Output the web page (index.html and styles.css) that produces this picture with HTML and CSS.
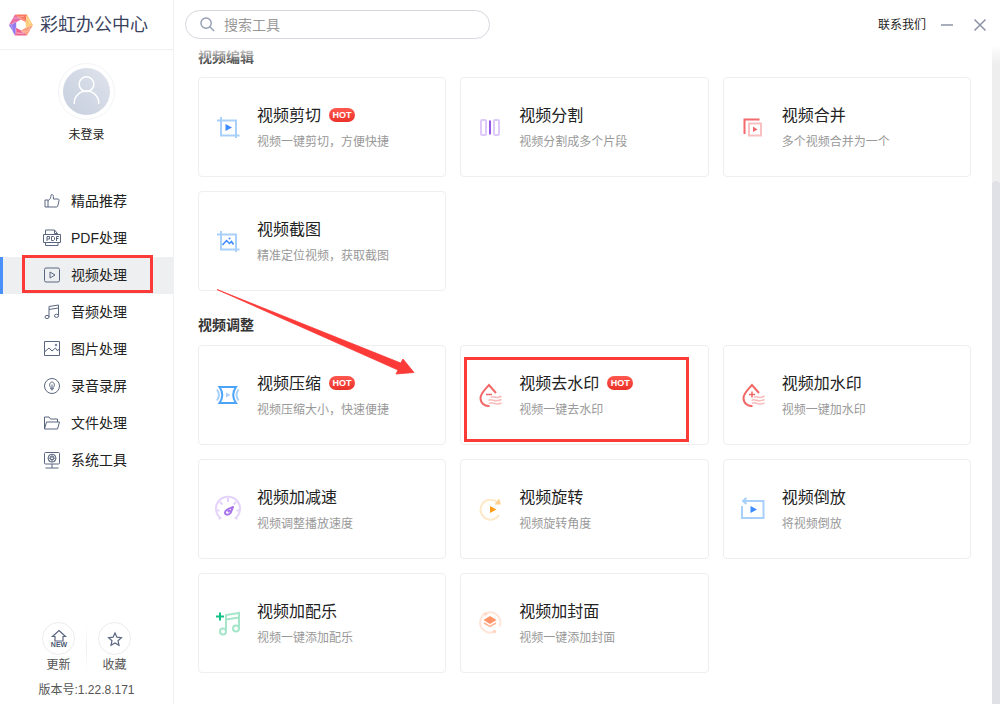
FILE: index.html
```html
<!DOCTYPE html>
<html lang="zh-CN">
<head>
<meta charset="utf-8">
<meta name="viewport" content="width=device-width, initial-scale=1">
<title>彩虹办公中心</title>
<link rel="stylesheet" href="styles.css">
</head>
<body>
<div class="app">
  <aside class="sidebar">
    <header class="brand">
      <svg class="brand-logo" viewBox="0 0 24 24" aria-hidden="true">
        <path fill="#fb9f80" d="M24 12L18 22.4L12 17.5L16.8 14.75Z"/>
        <path fill="#ee5f8c" d="M18 22.4L6 22.4L7.2 14.75L12 17.5Z"/>
        <path fill="#9378ee" d="M6 22.4L0 12L7.2 9.25L7.2 14.75Z"/>
        <path fill="#e66fa6" d="M0 12L6 1.6L12 6.5L7.2 9.25Z"/>
        <path fill="#f9765f" d="M6 1.6L18 1.6L16.8 9.25L12 6.5Z"/>
        <path fill="#fdc873" d="M18 1.6L24 12L16.8 14.75L16.8 9.25Z"/>
        <path fill="none" stroke="#fff" stroke-opacity=".55" stroke-width=".6" d="M4 5L12 5.2L17.8 8.5M17 3.4L20.6 9.5L17.6 14.6M21.5 15L17.6 19L12 18.6M15 21L7.4 19.4L6.4 14.6M3.8 18.6L2.6 12L6.4 8.4M8.6 4L15 3.4M19.6 6L22 11M6.8 20.8L15 19.8"/>
      </svg>
      <h1 class="brand-name">彩虹办公中心</h1>
    </header>

    <div class="profile">
      <button class="avatar" type="button" aria-label="登录">
        <svg viewBox="0 0 48 48" aria-hidden="true"><g fill="none" stroke="#fff" stroke-width="1.6" stroke-linecap="round"><circle cx="24" cy="16.500" r="7.500"/><path d="M11.500 36V35.500A12.500 12 0 0 1 36.500 35.500V36"/></g></svg>
      </button>
      <span class="profile-name">未登录</span>
    </div>

    <nav class="nav">
      <a class="nav-item" href="#featured">
        <svg class="nav-icon" viewBox="0 0 18 18" aria-hidden="true"><path d="M2 8H5V15H2ZM5 8.500C7.500 7.500 8 5 8 3.200C8.200 2 10.400 2.400 10.400 4.500V7H15C16 7 16.200 8 16 8.800L14.800 14C14.500 14.800 14 15 13.500 15H5"/></svg>
        精品推荐
      </a>
      <a class="nav-item" href="#pdf">
        <svg class="nav-icon" viewBox="0 0 18 18" aria-hidden="true"><path d="M2.500 5V1H11.500L14.500 4.500V5M11.500 1V4.500H14.500M.5 5.500H17.500V13.500H.5ZM2.500 14V16.500H15V14M4 12V7.500H6.500V10H4M8.500 7.500V11.500H10.500L11.500 10.500V8.500L10.500 7.500ZM13.500 12V7.500H16M13.500 9.500H15.500"/></svg>
        PDF处理
      </a>
      <a class="nav-item nav-item-active" href="#video" aria-current="page">
        <svg class="nav-icon" viewBox="0 0 18 18" aria-hidden="true"><rect x="1.500" y="2" width="15" height="14" rx="1.500"/><path d="M7 6L12 9L7 12Z"/></svg>
        视频处理
        <span class="mark mark-nav"></span>
      </a>
      <a class="nav-item" href="#audio">
        <svg class="nav-icon" viewBox="0 0 18 18" aria-hidden="true"><path d="M6 14V3.500L15.500 2V12.500M6 6.500L15.500 5"/><ellipse cx="4" cy="14" rx="2" ry="1.600"/><ellipse cx="13.500" cy="12.800" rx="2" ry="1.600"/></svg>
        音频处理
      </a>
      <a class="nav-item" href="#image">
        <svg class="nav-icon" viewBox="0 0 18 18" aria-hidden="true"><path d="M1.500 1.500H16.500V15.500H1.500ZM1.500 12L6 8L9 11L12.500 8L14 10.500L16.500 9.500"/><circle cx="13" cy="5" r=".8"/></svg>
        图片处理
      </a>
      <a class="nav-item" href="#record">
        <svg class="nav-icon" viewBox="0 0 18 18" aria-hidden="true"><circle cx="9" cy="9" r="7.500"/><path d="M7.800 10.500C5.500 8.500 7 5 9 5S12.500 8.500 10.200 10.500V12H7.800ZM9 7.500V13.500"/></svg>
        录音录屏
      </a>
      <a class="nav-item" href="#file">
        <svg class="nav-icon" viewBox="0 0 18 18" aria-hidden="true"><path d="M1.500 15V3H6L7.500 5H14.500V8M1.500 15L3.500 8H16.500L14.500 15Z"/></svg>
        文件处理
      </a>
      <a class="nav-item" href="#system">
        <svg class="nav-icon" viewBox="0 0 18 18" aria-hidden="true"><rect x="1.500" y="1.500" width="15" height="11.500" rx="1"/><path d="M9 13V17M2.500 17H15.500"/><circle cx="9" cy="7.200" r="4"/><circle cx="9" cy="7.200" r="1.500"/><path d="M9 3.400V5.700M9 8.700V11M5.200 7.200H7.500M10.500 7.200H12.800M6.300 4.500L8 6.200M11.700 4.500L10 6.200M6.300 9.900L8 8.200M11.700 9.900L10 8.200"/></svg>
        系统工具
      </a>
    </nav>

    <footer class="side-foot">
      <div class="quick">
        <button class="quick-btn" type="button">
          <span class="quick-circle">
            <svg viewBox="0 0 20 20" aria-hidden="true"><path d="M10 1.500L16.500 7.500H14V12H6V7.500H3.500Z"/><text class="new-label" x="10" y="18" text-anchor="middle">NEW</text></svg>
          </span>
          更新
        </button>
        <span class="quick-divider"></span>
        <button class="quick-btn" type="button">
          <span class="quick-circle">
            <svg viewBox="0 0 20 20" aria-hidden="true"><path d="M10 4L11.900 8.200L16.400 8.700L13 11.700L14 16.200L10 13.900L6 16.200L7 11.700L3.600 8.700L8.100 8.200Z"/></svg>
          </span>
          收藏
        </button>
      </div>
      <p class="version">版本号:1.22.8.171</p>
    </footer>
  </aside>

  <div class="main">
    <header class="topbar">
      <label class="search">
        <svg class="search-icon" viewBox="0 0 16 16" aria-hidden="true"><circle cx="6.500" cy="6.500" r="5.500"/><path d="M10.500 10.500L15 15"/></svg>
        <input class="search-input" type="search" placeholder="搜索工具" aria-label="搜索工具">
      </label>
      <div class="window-actions">
        <a class="contact" href="#contact">联系我们</a>
        <button class="win-btn" type="button" aria-label="最小化"><svg viewBox="0 0 14 14" aria-hidden="true"><path d="M1 7H13"/></svg></button>
        <button class="win-btn" type="button" aria-label="关闭"><svg viewBox="0 0 14 14" aria-hidden="true"><path d="M1.500 1.500L12.500 12.500M12.500 1.500L1.500 12.500"/></svg></button>
      </div>
    </header>

    <div class="viewport">
      <main class="content">
        <section class="group">
          <h2 class="group-title">视频编辑</h2>
          <div class="cards">
            <a class="card" href="#cut">
              <svg class="card-icon" viewBox="0 0 28 28" aria-hidden="true"><path fill="none" stroke="#a9d0fb" stroke-width="2" d="M3 7.500H22V25M7 4V22.500H25.500"/><path fill="#3d8bff" d="M11.500 11L18 14.500L11.500 18Z"/></svg>
              <span class="card-text"><span class="card-title">视频剪切<span class="hot">HOT</span></span><span class="card-desc">视频一键剪切，方便快捷</span></span>
            </a>
            <a class="card" href="#split">
              <svg class="card-icon" viewBox="0 0 28 28" aria-hidden="true"><g fill="none" stroke="#decafa" stroke-width="2"><rect x="5" y="7" width="5" height="15" rx="1"/><rect x="18" y="7" width="5" height="15" rx="1"/></g><path stroke="#9558ea" stroke-width="2" d="M14 7.500V21.500"/></svg>
              <span class="card-text"><span class="card-title">视频分割</span><span class="card-desc">视频分割成多个片段</span></span>
            </a>
            <a class="card" href="#merge">
              <svg class="card-icon" viewBox="0 0 28 28" aria-hidden="true"><path fill="none" stroke="#f4696b" stroke-width="2" d="M5.500 21V6.500H20.500"/><rect x="10" y="10.500" width="12" height="12" fill="none" stroke="#fabfc0" stroke-width="2"/><path fill="#f4696b" d="M14 13.500L18.500 16.500L14 19Z"/></svg>
              <span class="card-text"><span class="card-title">视频合并</span><span class="card-desc">多个视频合并为一个</span></span>
            </a>
            <a class="card" href="#snapshot">
              <svg class="card-icon" viewBox="0 0 28 28" aria-hidden="true"><path fill="none" stroke="#a9d0fb" stroke-width="2" d="M3 7.500H22V25M7 4V22.500H25.500"/><path fill="none" stroke="#3d8bff" stroke-width="1.500" d="M8.500 18L12.500 13.500L15.500 16.500L17.500 14.500L19.500 17.500"/><circle cx="15.500" cy="11.500" r="1" fill="#3d8bff"/></svg>
              <span class="card-text"><span class="card-title">视频截图</span><span class="card-desc">精准定位视频，获取截图</span></span>
            </a>
          </div>
        </section>

        <section class="group">
          <h2 class="group-title">视频调整</h2>
          <div class="cards">
            <a class="card" href="#compress">
              <svg class="card-icon" viewBox="0 0 28 28" aria-hidden="true"><path fill="none" stroke="#4ba3fa" stroke-width="2" d="M5.500 6H22C18.500 11 18.500 17 22 22H5.500C9 17 9 11 5.500 6Z"/><path fill="none" stroke="#a9d0fb" stroke-width="2" d="M3 8.500C5.500 12 5.500 16 3 19.500M24.500 8.500C22 12 22 16 24.500 19.500"/><path fill="#a9d0fb" d="M12 11.500L16.500 14L12 16.500Z"/></svg>
              <span class="card-text"><span class="card-title">视频压缩<span class="hot">HOT</span></span><span class="card-desc">视频压缩大小，快速便捷</span></span>
              <svg class="arrow" viewBox="0 0 198 86" aria-hidden="true"><path fill="#fc3b39" stroke="#fc3b39" stroke-width=".8" d="M0 .5L183.700 74L186 70L197 83.500L179 85L181 81Z"/></svg>
            </a>
            <a class="card" href="#remove-watermark">
              <svg class="card-icon" viewBox="0 0 28 28" aria-hidden="true"><path fill="none" stroke="#f26766" stroke-width="2" d="M20 12L13 4C9 8.500 4.500 12.500 4.500 17C4.500 22 8.500 25.500 13.500 25"/><path stroke="#f26766" stroke-width="1.500" d="M10 13.500H16"/><path fill="none" stroke="#f9bcbb" stroke-width="1.500" d="M15 16.500C18 13.500 19 19 25.500 15M12.500 19.500C16 17 18 22 25.500 18.500M13 22.500C16 20 19 25 25.500 22"/></svg>
              <span class="card-text"><span class="card-title">视频去水印<span class="hot">HOT</span></span><span class="card-desc">视频一键去水印</span></span>
              <span class="mark mark-card"></span>
            </a>
            <a class="card" href="#add-watermark">
              <svg class="card-icon" viewBox="0 0 28 28" aria-hidden="true"><path fill="none" stroke="#f26766" stroke-width="2" d="M20 12L13 4C9 8.500 4.500 12.500 4.500 17C4.500 22 8.500 25.500 13.500 25"/><path stroke="#f26766" stroke-width="1.500" d="M10 13.500H16M13 10.500V16.500"/><path fill="none" stroke="#f9bcbb" stroke-width="1.500" d="M15 16.500C18 13.500 19 19 25.500 15M12.500 19.500C16 17 18 22 25.500 18.500M13 22.500C16 20 19 25 25.500 22"/></svg>
              <span class="card-text"><span class="card-title">视频加水印</span><span class="card-desc">视频一键加水印</span></span>
            </a>
            <a class="card" href="#speed">
              <svg class="card-icon" viewBox="0 0 28 28" aria-hidden="true"><path fill="none" stroke="#e4d3fb" stroke-width="2" d="M4.500 24L7 22.500L6.500 23A12 12 0 1 1 21.500 23L21 22.500L23.500 24M14 3V7M6 7L8.500 9.500M22 7L19.500 9.500M2 15.500H5.500M26 15.500H22.500"/><path fill="none" stroke="#a873ec" stroke-width="2" stroke-linejoin="round" d="M19 12L16.500 18C14.500 20.500 11 20 11 17.500C11 15 14 14 19 12ZM14 17L16 15"/></svg>
              <span class="card-text"><span class="card-title">视频加减速</span><span class="card-desc">视频调整播放速度</span></span>
            </a>
            <a class="card" href="#rotate">
              <svg class="card-icon" viewBox="0 0 28 28" aria-hidden="true"><path fill="none" stroke="#ffe8c8" stroke-width="2" d="M21 7A10 10 0 1 0 23 20"/><path fill="#ffd08e" d="M23 3.500L25 9.500H18.500Z"/><path fill="#ff9d1b" d="M14 11L20.500 14.500L14 18Z"/></svg>
              <span class="card-text"><span class="card-title">视频旋转</span><span class="card-desc">视频旋转角度</span></span>
            </a>
            <a class="card" href="#reverse">
              <svg class="card-icon" viewBox="0 0 28 28" aria-hidden="true"><path fill="none" stroke="#a9d0fb" stroke-width="2" d="M3 11V23H24.500V6H4M7.500 3L4 6L7.500 9"/><path fill="#3d8bff" d="M11.500 11L18 14.500L11.500 18Z"/></svg>
              <span class="card-text"><span class="card-title">视频倒放</span><span class="card-desc">将视频倒放</span></span>
            </a>
            <a class="card" href="#music">
              <svg class="card-icon" viewBox="0 0 28 28" aria-hidden="true"><path fill="none" stroke="#a5e6cb" stroke-width="2" d="M12 22.500V6L25 4V20M12 10.500L25 8.500"/><g fill="none" stroke="#a5e6cb" stroke-width="2"><circle cx="9" cy="22.500" r="3"/><circle cx="22" cy="19.500" r="3"/></g><path stroke="#14c286" stroke-width="2" d="M2 7.500H10M6 3.500V11.500"/></svg>
              <span class="card-text"><span class="card-title">视频加配乐</span><span class="card-desc">视频一键添加配乐</span></span>
            </a>
            <a class="card" href="#cover">
              <svg class="card-icon" viewBox="0 0 28 28" aria-hidden="true"><g fill="none" stroke="#ffe5d8" stroke-width="2"><path d="M10 4.500A10 10 0 0 1 23.500 17.500M18.500 22.500A10 10 0 0 1 5 9.500M5 9.500L8 4.500"/></g><circle cx="9.500" cy="5" r="1.800" fill="#ffd8c6"/><circle cx="18.500" cy="22.500" r="1.800" fill="#ffd8c6"/><path fill="#ff9468" d="M14 7L20.500 11L14 15L7.500 11Z"/><path fill="none" stroke="#ffb395" stroke-width="1.500" d="M8 14L14 17.500L20 14"/></svg>
              <span class="card-text"><span class="card-title">视频加封面</span><span class="card-desc">视频一键添加封面</span></span>
            </a>
          </div>
        </section>
      </main>
      <div class="scrollbar" aria-hidden="true"><span class="scroll-thumb"></span></div>
    </div>
  </div>
</div>
</body>
</html>
```

FILE: styles.css
```css
* {
  box-sizing: border-box;
}

body {
  margin: 0;
  background: #fff;
  color: #222;
  font: 12px/16px "Liberation Sans", "Noto Sans CJK SC", sans-serif;
}

h1,
h2,
p {
  margin: 0;
}

a {
  color: inherit;
  text-decoration: none;
}

button {
  padding: 0;
  border: 0;
  background: none;
  color: inherit;
  font: inherit;
  cursor: pointer;
}

.app {
  display: grid;
  grid-template-columns: 174px minmax(0, 1fr);
  height: 100vh;
}

/* Sidebar */
.sidebar {
  display: flex;
  flex-direction: column;
  border-right: 1px solid #f0f0f2;
}

.brand {
  display: flex;
  align-items: center;
  gap: 7px;
  height: 50px;
  padding-left: 9px;
  border-bottom: 1px solid #f0f0f2;
}

.brand-logo {
  width: 24px;
  height: 24px;
}

.brand-name {
  color: #3a4360;
  font-size: 18px;
  font-weight: 400;
  line-height: 24px;
}

.profile {
  display: flex;
  flex-direction: column;
  align-items: center;
  gap: 7px;
  padding-top: 13px;
}

.avatar {
  width: 57px;
  height: 57px;
  padding: 4px;
  border: 1px solid #f2f3f6;
  border-radius: 50%;
}

.avatar svg {
  display: block;
  border-radius: 50%;
  background: linear-gradient(45deg, #c6cfde, #dfe3ec);
}

.nav {
  display: flex;
  flex-direction: column;
  padding-top: 40px;
}

.nav-item {
  position: relative;
  display: flex;
  align-items: center;
  gap: 10px;
  height: 37px;
  padding: 0 0 1px 40px;
  border-left: 3px solid transparent;
  font-size: 14px;
}

.nav-item-active {
  border-left-color: #4a90fb;
  background: #eeeff1;
}

.nav-icon {
  width: 18px;
  height: 18px;
  fill: none;
  stroke: #5a6780;
  stroke-width: 1;
}

.side-foot {
  display: flex;
  flex-direction: column;
  align-items: center;
  gap: 9px;
  margin-top: auto;
  padding-bottom: 6px;
  color: #555;
}

.quick {
  display: flex;
  align-items: center;
  gap: 11px;
}

.quick-btn {
  display: flex;
  flex-direction: column;
  align-items: center;
  gap: 2px;
}

.quick-circle {
  display: grid;
  place-items: center;
  width: 33px;
  height: 33px;
  border: 1px solid #ececf0;
  border-radius: 50%;
}

.quick-circle svg {
  width: 20px;
  height: 20px;
  fill: none;
  stroke: #5a6780;
  stroke-width: 1.2;
}

.quick-circle .new-label {
  fill: #4c5872;
  stroke: none;
  font: bold 7px "Liberation Sans", sans-serif;
}

.quick-divider {
  width: 1px;
  height: 44px;
  background: linear-gradient(#fff, #eee, #fff);
}

/* Main column */
.main {
  display: flex;
  flex-direction: column;
  min-height: 0;
}

.topbar {
  position: relative;
  display: flex;
  align-items: center;
  justify-content: space-between;
  padding: 10px 13px 8px 11px;
}

.topbar::after {
  content: "";
  position: absolute;
  z-index: 1;
  top: 100%;
  right: 0;
  left: 0;
  height: 18px;
  background: linear-gradient(rgba(255, 255, 255, .9), rgba(255, 255, 255, 0));
  pointer-events: none;
}

.search {
  display: flex;
  align-items: center;
  gap: 9px;
  width: 305px;
  height: 29px;
  padding: 0 14px;
  border: 1px solid #d6d8de;
  border-radius: 15px;
}

.search-icon {
  width: 15px;
  height: 15px;
  fill: none;
  stroke: #929cb2;
  stroke-width: 1.5px;
}

.search-input {
  flex: 1;
  min-width: 0;
  padding: 0;
  border: 0;
  outline: 0;
  background: none;
  font: 14px/20px "Liberation Sans", "Noto Sans CJK SC", sans-serif;
}

.search-input::placeholder {
  color: #999;
}

.window-actions {
  display: flex;
  align-items: center;
  gap: 19px;
}

.contact {
  margin-right: -5px;
}

.win-btn {
  width: 14px;
  height: 14px;
}

.win-btn svg {
  display: block;
  stroke: #8b93a5;
  stroke-width: 1.5px;
}

.viewport {
  display: flex;
  flex: 1;
  gap: 21px;
  min-height: 0;
  overflow: hidden;
}

.content {
  display: flex;
  flex: 1;
  flex-direction: column;
  gap: 24px;
  padding-left: 24px;
}

.group {
  display: flex;
  flex-direction: column;
  gap: 10px;
}

.group-title {
  color: #333;
  font-size: 14px;
  line-height: 20px;
}

.cards {
  display: grid;
  grid-template-columns: repeat(3, minmax(0, 1fr));
  gap: 14px;
}

.card {
  position: relative;
  display: flex;
  align-items: center;
  gap: 15px;
  height: 100px;
  padding: 0 15px;
  border: 1px solid #eee;
  border-radius: 4px;
}

.card-icon {
  flex: none;
  width: 28px;
  height: 28px;
}

.card-text {
  display: flex;
  flex-direction: column;
  gap: 6px;
}

.card-title {
  display: flex;
  align-items: center;
  gap: 8px;
  font-size: 16px;
  line-height: 24px;
}

.card-desc {
  color: #999;
}

.hot {
  width: 26px;
  height: 14px;
  margin-bottom: 2px;
  border-radius: 7px;
  background: linear-gradient(#ff5850, #ea3129);
  color: #fff;
  font-size: 9px;
  font-weight: 700;
  line-height: 14px;
  text-align: center;
}

.scrollbar {
  width: 8px;
  padding-top: 134px;
  background: #eee;
}

.scroll-thumb {
  display: block;
  height: 100%;
  border-radius: 4px 4px 0 0;
  background: #e0e1e6;
}

/* Annotations lying over the interface */
.mark {
  position: absolute;
  border: 3px solid #fc3b39;
  pointer-events: none;
}

.mark-nav {
  inset: -2px 20px 1px 19px;
}

.mark-card {
  inset: 11px 19px 2px 3px;
}

.arrow {
  position: absolute;
  z-index: 1;
  top: -57px;
  left: 18px;
  width: 198px;
  height: 86px;
  pointer-events: none;
}
```
